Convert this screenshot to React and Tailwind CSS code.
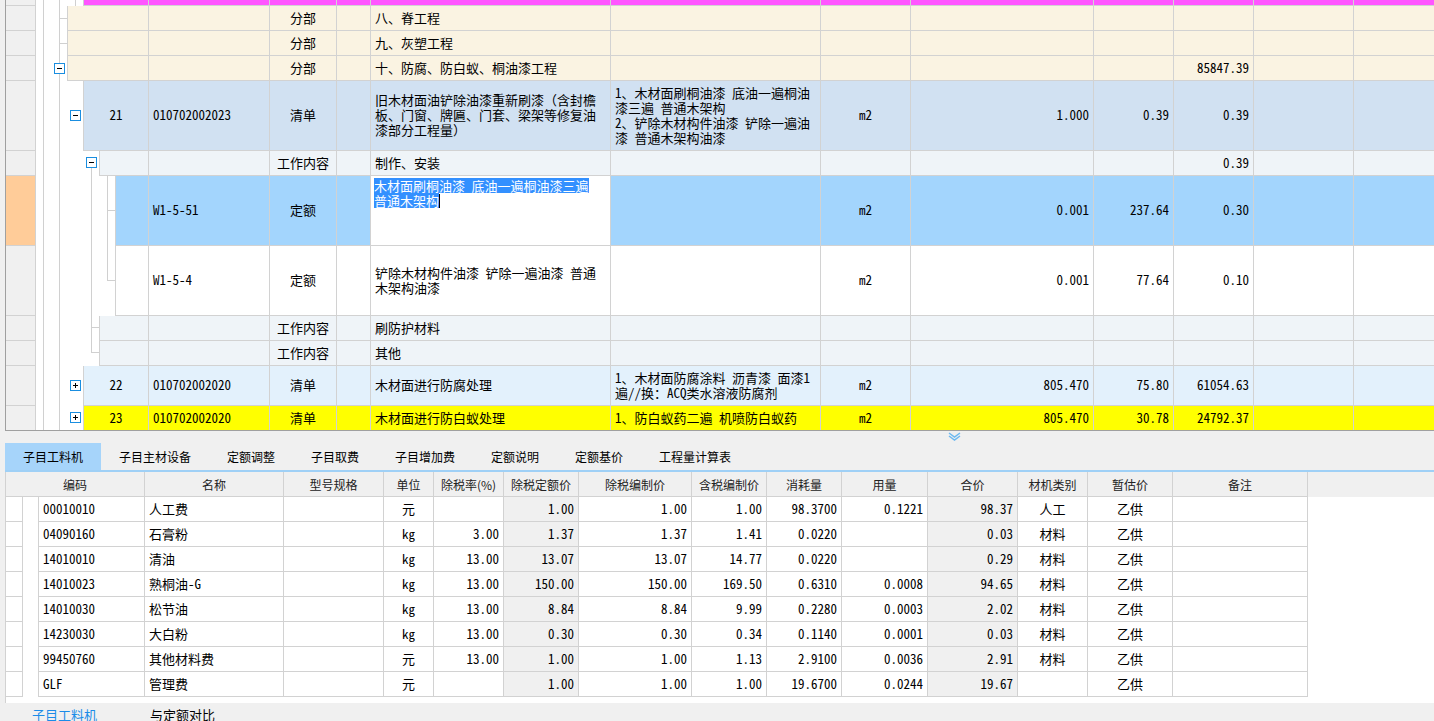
import React from 'react';

const gridFont = "font-['Noto_Sans_Mono_CJK_SC','Noto_Sans_CJK_SC',monospace]";
const uiFont = "font-['Noto_Sans_CJK_SC','Noto_Sans',sans-serif]";

// top grid columns after the sequence cell
const topCols = [
  'w-[121px] justify-start',
  'w-[67px] justify-center',
  'w-[34px] justify-center',
  'w-[240px] justify-start',
  'w-[210px] justify-start',
  'w-[90px] justify-center',
  'w-[183px] justify-end',
  'w-[80px] justify-end',
  'w-[80px] justify-end',
  'w-[100px] justify-end',
];

const seqW = { 67: 'w-[82px]', 83: 'w-[66px]', 99: 'w-[50px]', 115: 'w-[34px]' };

const topRows = [
  { h: 'h-[6px]', hp: 6, start: 83, bg: 'bg-[#ff55ff]', v: [43, 59, 75], cells: [] },
  { h: 'h-[25px]', hp: 25, start: 67, bg: 'bg-[#faf3e2]', v: [43, 59], stub: [[12, 59, 67]], cells: ['', '', '分部', '', '八、脊工程'] },
  { h: 'h-[25px]', hp: 25, start: 67, bg: 'bg-[#faf3e2]', v: [43, 59], stub: [[12, 59, 67]], cells: ['', '', '分部', '', '九、灰塑工程'] },
  { h: 'h-[25px]', hp: 25, start: 67, bg: 'bg-[#faf3e2]', v: [43], seg: [[59, 0, 7], [59, 18, 25]], btn: [59, 12, '-'], cells: ['', '', '分部', '', '十、防腐、防白蚁、桐油漆工程', '', '', '', '', '85847.39'] },
  {
    h: 'h-[70px]', hp: 70, start: 83, bg: 'bg-[#d1e1f2]', v: [43, 59], btn: [75, 34, '-'],
    cells: ['21', '010702002023', '清单', '',
      ['旧木材面油铲除油漆重新刷漆（含封檐', '板、门窗、牌匾、门套、梁架等修复油', '漆部分工程量）'],
      ['1、木材面刷桐油漆 底油一遍桐油', '漆三遍 普通木架构', '2、铲除木材构件油漆 铲除一遍油', '漆 普通木架构油漆'],
      'm2', '1.000', '0.39', '0.39'],
  },
  { h: 'h-[25px]', hp: 25, start: 99, bg: 'bg-[#eff4f8]', v: [43, 59], btn: [91, 11, '-'], seg: [[91, 17, 25]], cells: ['', '', '工作内容', '', '制作、安装', '', '', '', '', '0.39'] },
  { h: 'h-[70px]', hp: 70, start: 115, bg: 'bg-[#a3d5fd]', sel: true, v: [43, 59, 91], seg: [[107, 0, 70]], stub: [[34, 107, 115]], cells: ['', 'W1-5-51', '定额', '', 'EDIT', '', 'm2', '0.001', '237.64', '0.30'] },
  { h: 'h-[70px]', hp: 70, start: 115, bg: 'bg-white', v: [43, 59, 91], seg: [[107, 0, 35]], stub: [[34, 107, 115]], cells: ['', 'W1-5-4', '定额', '', ['铲除木材构件油漆 铲除一遍油漆 普通', '木架构油漆'], '', 'm2', '0.001', '77.64', '0.10'] },
  { h: 'h-[25px]', hp: 25, start: 99, bg: 'bg-[#eff4f8]', v: [43, 59, 91], stub: [[11, 91, 99]], cells: ['', '', '工作内容', '', '刷防护材料'] },
  { h: 'h-[25px]', hp: 25, start: 99, bg: 'bg-[#eff4f8]', v: [43, 59], seg: [[91, 0, 12]], stub: [[11, 91, 99]], cells: ['', '', '工作内容', '', '其他'] },
  {
    h: 'h-[40px]', hp: 40, start: 83, bg: 'bg-[#e3f1fc]', v: [43, 59], btn: [75, 19, '+'],
    cells: ['22', '010702002020', '清单', '', '木材面进行防腐处理', ['1、木材面防腐涂料 沥青漆 面漆1', '遍//换：ACQ类水溶液防腐剂'], 'm2', '805.470', '75.80', '61054.63'],
  },
  {
    h: 'h-[24px]', hp: 24, start: 83, bg: 'bg-[#ffff00]', last: true, v: [43, 59], btn: [75, 11, '+'],
    cells: ['23', '010702002020', '清单', '', '木材面进行防白蚁处理', '1、防白蚁药二遍 机喷防白蚁药', 'm2', '805.470', '30.78', '24792.37'],
  },
];

const Gutter = ({ row }) => {
  const w = row.start - 36;
  const h = row.hp;
  const c = '#d0d0d0';
  return (
    <svg width={w} height={h} className="shrink-0 block bg-white">
      {row.v.map((x) => (
        <line key={'v' + x} x1={x - 35.5} x2={x - 35.5} y1={0} y2={h} stroke={c} />
      ))}
      {(row.seg || []).map(([x, a, b]) => (
        <line key={'s' + x + a} x1={x - 35.5} x2={x - 35.5} y1={a} y2={b} stroke={c} />
      ))}
      {(row.stub || []).map(([y, a, b]) => (
        <line key={'t' + y + a} x1={a - 36} x2={b - 36} y1={y + 0.5} y2={y + 0.5} stroke={c} />
      ))}
      {row.btn && (
        <g>
          <rect x={row.btn[0] - 41 + 0.5} y={row.btn[1] - 5 + 0.5} width={10} height={10} fill="#fff" stroke="#1a8ee0" />
          <line x1={row.btn[0] - 38} x2={row.btn[0] - 33} y1={row.btn[1] + 0.5} y2={row.btn[1] + 0.5} stroke="#000" />
          {row.btn[2] === '+' && (
            <line x1={row.btn[0] - 35.5} x2={row.btn[0] - 35.5} y1={row.btn[1] - 2} y2={row.btn[1] + 3} stroke="#000" />
          )}
        </g>
      )}
    </svg>
  );
};

const CellText = ({ value }) => {
  if (Array.isArray(value)) {
    return (
      <div className="flex flex-col">
        {value.map((l, i) => (
          <div key={i} className="whitespace-pre">{l}</div>
        ))}
      </div>
    );
  }
  return <span className="whitespace-pre">{value}</span>;
};

const EditCell = () => (
  <div className="w-[240px] shrink-0 self-stretch bg-white border-r border-b border-[#d2d2d2] px-[3px] pt-[2px] flex flex-col items-start">
    <div className="h-[15px] bg-[#3390ff] text-white whitespace-pre">木材面刷桐油漆 底油一遍桐油漆三遍</div>
    <div className="flex items-center">
      <div className="h-[15px] bg-[#3390ff] text-white whitespace-pre">普通木架构</div>
      <div className="w-px h-[14px] bg-black" />
    </div>
  </div>
);

const TopRow = ({ row }) => {
  const b = row.last ? '' : 'border-b';
  const cells = row.cells;
  return (
    <div className={`flex ${row.h}`}>
      <div className={`w-[30px] shrink-0 border-r border-[#d2d2d2] ${b} ${row.sel ? 'bg-[#ffcc99]' : 'bg-[#f0f0f0]'}`} />
      <Gutter row={row} />
      <div className={`${seqW[row.start]} shrink-0 flex items-center justify-center pb-[2px] border-l border-r ${b} border-[#d2d2d2] ${row.bg}`}>
        {cells[0]}
      </div>
      {topCols.map((cls, i) => {
        const val = cells[i + 1] || '';
        if (val === 'EDIT') return <EditCell key={i} />;
        return (
          <div key={i} className={`${cls} shrink-0 flex items-center border-r ${b} border-[#d2d2d2] px-[4px] pb-[2px] ${row.bg}`}>
            <CellText value={val} />
          </div>
        );
      })}
      <div className={`flex-1 ${b} border-[#d2d2d2] ${row.bg}`} />
    </div>
  );
};

const tabs = ['子目工料机', '子目主材设备', '定额调整', '子目取费', '子目增加费', '定额说明', '定额基价', '工程量计算表'];

const bottomCols = [
  ['编码', 'w-[139px]', 'justify-start'],
  ['名称', 'w-[139px]', 'justify-start'],
  ['型号规格', 'w-[100px]', 'justify-start'],
  ['单位', 'w-[50px]', 'justify-center'],
  ['除税率(%)', 'w-[70px]', 'justify-end'],
  ['除税定额价', 'w-[75px]', 'justify-end'],
  ['除税编制价', 'w-[113px]', 'justify-end'],
  ['含税编制价', 'w-[75px]', 'justify-end'],
  ['消耗量', 'w-[75px]', 'justify-end'],
  ['用量', 'w-[86px]', 'justify-end'],
  ['合价', 'w-[90px]', 'justify-end'],
  ['材机类别', 'w-[70px]', 'justify-center'],
  ['暂估价', 'w-[85px]', 'justify-center'],
  ['备注', 'w-[135px]', 'justify-start'],
];

const materials = [
  ['00010010', '人工费', '', '元', '', '1.00', '1.00', '1.00', '98.3700', '0.1221', '98.37', '人工', '乙供', ''],
  ['04090160', '石膏粉', '', 'kg', '3.00', '1.37', '1.37', '1.41', '0.0220', '', '0.03', '材料', '乙供', ''],
  ['14010010', '清油', '', 'kg', '13.00', '13.07', '13.07', '14.77', '0.0220', '', '0.29', '材料', '乙供', ''],
  ['14010023', '熟桐油-G', '', 'kg', '13.00', '150.00', '150.00', '169.50', '0.6310', '0.0008', '94.65', '材料', '乙供', ''],
  ['14010030', '松节油', '', 'kg', '13.00', '8.84', '8.84', '9.99', '0.2280', '0.0003', '2.02', '材料', '乙供', ''],
  ['14230030', '大白粉', '', 'kg', '13.00', '0.30', '0.30', '0.34', '0.1140', '0.0001', '0.03', '材料', '乙供', ''],
  ['99450760', '其他材料费', '', '元', '13.00', '1.00', '1.00', '1.13', '2.9100', '0.0036', '2.91', '材料', '乙供', ''],
  ['GLF', '管理费', '', '元', '', '1.00', '1.00', '1.00', '19.6700', '0.0244', '19.67', '', '乙供', ''],
];

const App = () => {
  return (
    <div className={`w-[1434px] h-[721px] overflow-hidden bg-[#f0f0f0] flex flex-col text-black ${gridFont} text-[13px] leading-[15px]`}>
      {/* upper grid */}
      <div className="ml-[5px] border-l border-b border-[#a0a0a0] flex flex-col shrink-0">
        {topRows.map((row, i) => (
          <TopRow key={i} row={row} />
        ))}
      </div>

      {/* splitter */}
      <div className="h-[12px] shrink-0 flex">
        <svg width="13" height="9" className="ml-[948px] mt-[1px]">
          <polyline points="1,1 6.5,5 12,1" fill="none" stroke="#6cb8f0" strokeWidth="1.5" />
          <polyline points="1,4 6.5,8 12,4" fill="none" stroke="#6cb8f0" strokeWidth="1.5" />
        </svg>
      </div>

      {/* tabs */}
      <div className={`ml-[5px] h-[27px] flex shrink-0 ${uiFont} text-[12px]`}>
        {tabs.map((t, i) => (
          <div key={t} className={`px-[18px] flex items-center ${i === 0 ? 'bg-[#a6d4fa]' : ''}`}>{t}</div>
        ))}
      </div>
      <div className="ml-[5px] h-[2px] bg-[#9fd0f6] shrink-0" />

      {/* lower grid */}
      <div className="ml-[5px] border-l border-[#d2d2d2] bg-white flex flex-col shrink-0">
        <div className={`flex h-[25px] bg-[#f0f0f0] ${uiFont} text-[12px] text-[#222]`}>
          {bottomCols.map(([name, w]) => (
            <div key={name} className={`${w} shrink-0 flex items-center justify-center border-r border-b border-[#d2d2d2]`}>{name}</div>
          ))}
          <div className="flex-1" />
        </div>
        {materials.map((r, ri) => (
          <div key={ri} className="flex h-[25px]">
            <div className="w-[17px] shrink-0 border-r border-b border-[#d2d2d2]" />
            <div className="w-[16px] shrink-0 border-r border-[#d2d2d2]" />
            {bottomCols.map(([name, w, j], ci) => (
              <div
                key={name}
                className={`${ci === 0 ? 'w-[106px]' : w} shrink-0 flex items-center ${j} px-[4px] pb-[2px] border-r border-b border-[#d2d2d2] ${ci === 5 || ci === 10 ? 'bg-[#f0f0f0]' : ''}`}
              >
                <span className="whitespace-pre">{r[ci]}</span>
              </div>
            ))}
            <div className="flex-1" />
          </div>
        ))}
        <div className="h-[6px]" />
      </div>

      {/* status tabs */}
      <div className={`flex-1 flex pt-[3px] ${uiFont} text-[13px] leading-[18px]`}>
        <div className="ml-[32px] text-[#1b8ce8]">子目工料机</div>
        <div className="ml-[53px]">与定额对比</div>
      </div>
    </div>
  );
};

export default App;
